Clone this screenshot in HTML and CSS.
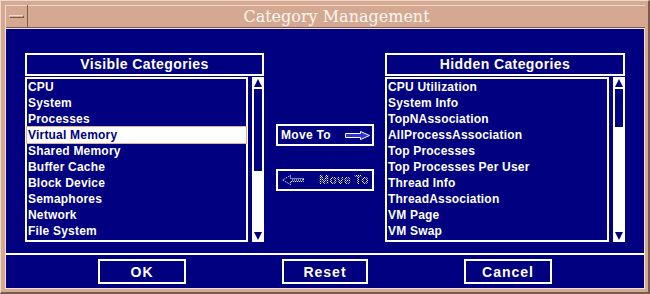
FILE: index.html
```html
<!doctype html>
<html lang="en">
	<head>
		<meta charset="UTF-8" />
		<title>Category Management</title>
		<link rel="stylesheet" href="styles.css">
	</head>
	<body>
		<div class="window">
			<div class="titlebar">
				<div class="menu-btn"><span class="menu-bar"></span></div>
				<div class="title">Category Management</div>
			</div>

			<div class="dialog">
				<div class="lists">
					<div class="panel">
						<div class="panel-head">Visible Categories</div>
						<div class="panel-body">
							<ul class="list">
								<li>CPU</li>
								<li>System</li>
								<li>Processes</li>
								<li class="selected">Virtual Memory</li>
								<li>Shared Memory</li>
								<li>Buffer Cache</li>
								<li>Block Device</li>
								<li>Semaphores</li>
								<li>Network</li>
								<li>File System</li>
							</ul>
							<div class="scrollbar">
								<div class="arrow"><span class="tri up"></span></div>
								<div class="trough"><div class="thumb" style="height: 82px"></div></div>
								<div class="arrow"><span class="tri down"></span></div>
							</div>
						</div>
					</div>

					<div class="moves">
						<button class="move">
							<span class="label">Move To</span>
							<svg width="25" height="9" viewBox="0 0 25 9">
								<polygon points="0.5,2.5 15.5,2.5 15.5,0.5 24.5,4.5 15.5,8.5 15.5,6.5 0.5,6.5" fill="#3030e0" stroke="#fff" stroke-width="1" />
							</svg>
						</button>
						<button class="move disabled">
							<svg width="22" height="10" viewBox="0 0 22 10">
								<polygon points="21.5,3.5 8.5,3.5 8.5,0.5 0.5,5 8.5,9.5 8.5,6.5 21.5,6.5" fill="none" stroke="#fff" stroke-width="1" stroke-dasharray="1 1" />
								<line x1="10" y1="5" x2="21" y2="5" stroke="#fff" stroke-width="1" stroke-dasharray="1 1" />
							</svg>
							<span class="label">Move To</span>
						</button>
					</div>

					<div class="panel wide">
						<div class="panel-head">Hidden Categories</div>
						<div class="panel-body">
							<ul class="list">
								<li>CPU Utilization</li>
								<li>System Info</li>
								<li>TopNAssociation</li>
								<li>AllProcessAssociation</li>
								<li>Top Processes</li>
								<li>Top Processes Per User</li>
								<li>Thread Info</li>
								<li>ThreadAssociation</li>
								<li>VM Page</li>
								<li>VM Swap</li>
							</ul>
							<div class="scrollbar">
								<div class="arrow"><span class="tri up"></span></div>
								<div class="trough"><div class="thumb" style="height: 38px"></div></div>
								<div class="arrow"><span class="tri down"></span></div>
							</div>
						</div>
					</div>
				</div>

				<div class="actions">
					<button class="action">OK</button>
					<button class="action">Reset</button>
					<button class="action">Cancel</button>
				</div>
			</div>
		</div>
	</body>
</html>
```

FILE: styles.css
```css
body { margin: 0; background: #d5a891; font-family: "Liberation Sans", Arial, sans-serif; }
.window { width: 650px; height: 294px; box-sizing: border-box; background: #d5a891; border-top: 1px solid #f0d8cc; border-left: 1px solid #f0d8cc; border-right: 2px solid #7a5a4c; border-bottom: 2px solid #7a5a4c; padding: 4px 3px 3px 4px; }

.titlebar { display: flex; height: 23px; box-sizing: border-box; border-top: 1px solid #f0d8cc; border-bottom: 1px solid #7a5a4c; }
.menu-btn { width: 23px; box-sizing: border-box; border-left: 1px solid #f0d8cc; border-right: 1px solid #7a5a4c; margin-top: -1px; margin-bottom: -1px; display: flex; align-items: center; justify-content: center; }
.menu-bar { display: block; width: 15px; height: 3px; box-sizing: border-box; border: 1px solid #f0d8cc; border-right-color: #7a5a4c; border-bottom-color: #7a5a4c; }
.title { flex: 1; text-align: center; font-family: "DejaVu Serif", serif; font-size: 16px; line-height: 21px; color: #fdf6f2; }

.dialog { height: 261px; box-sizing: border-box; border: 1px solid #f0e0d8; background: #000080; color: #fff; }
.lists { display: flex; height: 224px; box-sizing: border-box; padding: 24px 19px 0 19px; }
.panel { width: 239px; }
.panel.wide { width: 240px; }
.panel-head { height: 23px; box-sizing: border-box; border: 2px solid #fff; margin-bottom: 1px; text-align: center; font-weight: bold; font-size: 14px; letter-spacing: 0.4px; line-height: 19px; }
.panel-body { display: flex; gap: 4px; height: 165px; }

.list { flex: 1; margin: 0; padding: 0; list-style: none; border: 2px solid #fff; }
.list li { height: 16px; line-height: 16px; padding-left: 1px; font-weight: bold; font-size: 12px; letter-spacing: 0.2px; white-space: nowrap; }
.list li.selected { background: #fff; color: #000080; box-shadow: 0 0 0 1px #e0b090; }

.scrollbar { width: 12px; background: #fff; display: flex; flex-direction: column; }
.arrow { height: 12px; display: flex; align-items: center; justify-content: center; }
.tri { width: 0; height: 0; border-left: 4px solid transparent; border-right: 4px solid transparent; }
.tri.up { border-bottom: 8px solid #000080; }
.tri.down { border-top: 8px solid #000080; }
.trough { flex: 1; padding: 0 2px; }
.thumb { background: #000080; }

.moves { display: flex; flex-direction: column; gap: 23px; padding: 71px 11px 0 12px; }
.move { width: 98px; height: 22px; box-sizing: border-box; border: 2px solid #fff; background: #000080; color: #fff; display: flex; align-items: center; justify-content: space-between; padding: 0 2px 0 3px; font-family: "Liberation Sans", Arial, sans-serif; font-weight: bold; font-size: 12px; letter-spacing: 0.3px; }
.move svg { display: block; }
.move.disabled { padding: 0 3px 0 4px; }
.move.disabled .label { color: transparent; background: repeating-conic-gradient(#fff 0 25%, transparent 0 50%) 0 0 / 2px 2px; -webkit-background-clip: text; background-clip: text; }

.actions { height: 35px; box-sizing: border-box; border-top: 2px solid #fff; display: flex; justify-content: center; gap: 96px; padding-top: 4px; }
.action { width: 88px; height: 25px; box-sizing: border-box; border: 2px solid #fff; background: #000080; color: #fff; font-family: "Liberation Sans", Arial, sans-serif; font-weight: bold; font-size: 14px; letter-spacing: 1px; padding: 0; }
.action:nth-child(2) { width: 86px; }
```
